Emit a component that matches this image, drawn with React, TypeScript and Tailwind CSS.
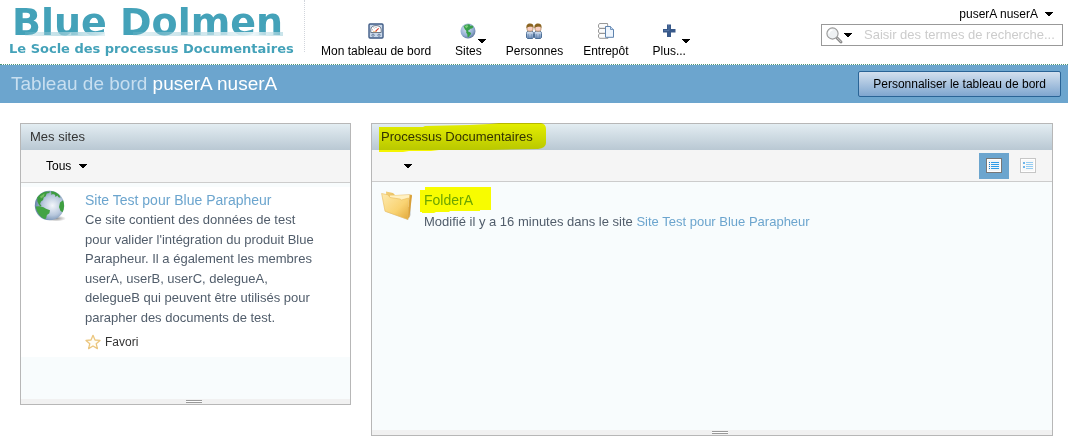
import type { ReactNode } from "react";

function Caret({ className = "" }: { className?: string }) {
  return (
    <svg className={className} width="8" height="4" viewBox="0 0 8 4" shapeRendering="crispEdges" aria-hidden="true">
      <path d="M0 0h8v1H7v1H6v1H5v1H3V3H2V2H1V1H0z" fill="#000" />
    </svg>
  );
}

function GaugeIcon() {
  return (
    <svg width="16" height="16" viewBox="0 0 16 16" aria-hidden="true">
      <rect x="1" y="1" width="14" height="14" rx="1" fill="#c9d8ea" stroke="#3f5b85" strokeWidth="1.4" />
      <path d="M2.800 9.500V6.800C2.800 4 5 2.600 8 2.600s5.200 1.400 5.200 4.200v2.700z" fill="#fff" stroke="#4c5b70" strokeWidth=".8" />
      <path d="M4.300 6.700l.8.400M5.800 4.600l.5.700M8 4v.8" stroke="#555" strokeWidth=".7" />
      <path d="M7.500 8.400l3.200-3" stroke="#e0392b" strokeWidth="1.200" />
      <path d="M5 8.700h4" stroke="#e9a24a" strokeWidth=".7" />
      <circle cx="5" cy="12.200" r="1.100" fill="#fff" stroke="#3f5b85" strokeWidth=".8" />
      <circle cx="11" cy="12.200" r="1.100" fill="#fff" stroke="#3f5b85" strokeWidth=".8" />
    </svg>
  );
}

function SmallGlobeIcon() {
  return (
    <svg width="16" height="16" viewBox="0 0 16 16" aria-hidden="true">
      <defs>
        <radialGradient id="smallGlobe" cx=".4" cy=".35" r=".7">
          <stop offset="0" stopColor="#d6e2f2" />
          <stop offset=".65" stopColor="#94aed3" />
          <stop offset="1" stopColor="#5a7399" />
        </radialGradient>
      </defs>
      <circle cx="8" cy="8" r="7.500" fill="url(#smallGlobe)" />
      <path d="M3.500 3.200C5 1.600 7.500.9 9.500 1.300l.8 1.500 2-.3 1.200 1.400-1.500 1.500-1.600.3L9 7.200l-1 .3.500 1.300 1.800.4.900 1.500-1.600 2-1.100 1.600-1-.6-.2-2.500-1.200-1.800.3-1.300L4.800 6.300z" fill="#37a04a" />
      <path d="M4.500 3.300l2.700-1.200 1 1.500-1.800 1.600z" fill="#7ccb7a" />
    </svg>
  );
}

function PeopleIcon() {
  return (
    <svg width="16" height="16" viewBox="0 0 16 16" aria-hidden="true">
      <defs>
        <linearGradient id="shirt" x1="0" y1="0" x2="0" y2="1">
          <stop offset="0" stopColor="#e4eefa" />
          <stop offset="1" stopColor="#6688b5" />
        </linearGradient>
      </defs>
      {[0, 8].map((x) => (
        <g key={x} transform={`translate(${x} 0)`}>
          <path d="M.5 14.500V10.500C.5 8.800 1.200 8 4 8s3.500.8 3.500 2.500v4l-1 1h-5z" fill="url(#shirt)" stroke="#42658f" strokeWidth=".9" />
          <path d="M2.300 11v4M5.700 11v4" stroke="#6382ab" strokeWidth=".6" />
          <rect x="1" y="3" width="6" height="5.200" rx="2" fill="#f7cfc4" stroke="#9a7040" strokeWidth=".6" />
          <path d="M.5 5.500C0 2 1.500.6 4 .6S8 2 7.500 5.200L6.600 3.800 4 3.500 1.400 4.200z" fill="#8a6420" />
        </g>
      ))}
    </svg>
  );
}

function RepositoryIcon() {
  return (
    <svg width="16" height="16" viewBox="0 0 16 16" aria-hidden="true">
      <g fill="#fbfbfb" stroke="#8d8d8d" strokeWidth=".9">
        <path d="M9.500 .5H1.500L.5 2v2l1 1.300H10z" />
        <path d="M9.500 5.500h-8L.5 7v2l1 1.300H10z" />
        <path d="M9.500 10.500h-8L.5 12v2l1 1.300H10z" />
      </g>
      <path d="M7.500 3.500h5l3 3v7.800h-8z" fill="#eef5fd" stroke="#5e83ae" />
      <path d="M12.500 3.500v3h3" fill="#c4d8ee" stroke="#5e83ae" strokeWidth=".8" />
    </svg>
  );
}

function PlusIcon() {
  return (
    <svg width="16" height="16" viewBox="0 0 16 16" aria-hidden="true">
      <path d="M6 1.500h4v4.500h4.500v3.500H10v4.500H6V9.500H2V6h4z" fill="#38598a" />
      <path d="M7 2.500h1v5H3" fill="none" stroke="#5b7bab" strokeWidth=".7" />
    </svg>
  );
}

function MagnifierIcon() {
  return (
    <svg width="17" height="17" viewBox="0 0 17 17" aria-hidden="true">
      <path d="M10.800 10.800l4.200 4.200" stroke="#777" strokeWidth="2.800" strokeLinecap="round" />
      <path d="M11 10.800l4 4" stroke="#c4c4c4" strokeWidth="1.200" strokeLinecap="round" />
      <circle cx="6.500" cy="6.500" r="5.600" fill="#eef1f3" stroke="#999" strokeWidth="1.100" />
      <path d="M3 6.500A3.500 3.500 0 016.500 3" fill="none" stroke="#fff" strokeWidth="1.500" />
    </svg>
  );
}

function GlobeIcon() {
  return (
    <svg width="32" height="32" viewBox="0 0 32 32" aria-hidden="true">
      <defs>
        <radialGradient id="globe" cx=".6" cy=".5" r=".6">
          <stop offset="0" stopColor="#f3f6fb" />
          <stop offset=".55" stopColor="#b8c8dd" />
          <stop offset="1" stopColor="#6482a8" />
        </radialGradient>
        <radialGradient id="globeShadow">
          <stop offset="0" stopColor="#000" stopOpacity=".45" />
          <stop offset="1" stopColor="#000" stopOpacity="0" />
        </radialGradient>
      </defs>
      <ellipse cx="22" cy="28.500" rx="10" ry="3" fill="url(#globeShadow)" />
      <circle cx="15.500" cy="15.500" r="14.700" fill="url(#globe)" />
      <path d="M3.200 7.600C5 5 7.800 2.700 11 1.700l5-.3-.8 1.500-2.500.6-1 2.800-2.100 1.100-.5 2.600-2.100 1.400-1 2.600 1.500 1.500-1.300.9L4.500 14l-1.200-2.700z" fill="#3c9c3f" />
      <path d="M1.500 16.500l4-.2 4 1 2.500 1.500 4 1.500-.6 2.900-2.500 1.800-.7 3-1 1.200C6.500 27.500 3 23 1.500 16.500z" fill="#43a344" />
      <path d="M17 1.200c3.500.2 6 1.400 8.300 3.800l1.200 2.700-2-.5-1.200-1.800-1.800 1.500-.5-2.200-2.200-.6L17.500 5z" fill="#3c9c3f" />
      <path d="M26 12.500l3-2.300c1.700 4 1.400 8.300-.5 12l-2-1.200-1.500-4z" fill="#3f9f40" />
      <path d="M6 6.500l4.500-3-.5 3-3 2z" fill="#73bd63" />
    </svg>
  );
}

function FolderIcon() {
  return (
    <svg width="32" height="32" viewBox="0 0 32 32" aria-hidden="true">
      <defs>
        <linearGradient id="folderFront" x1="0" y1="0" x2="1" y2="1">
          <stop offset="0" stopColor="#fdeab0" />
          <stop offset=".6" stopColor="#f9d372" />
          <stop offset="1" stopColor="#e2a93b" />
        </linearGradient>
        <linearGradient id="folderBack" x1="0" y1="0" x2="1" y2="0">
          <stop offset="0" stopColor="#f2cf78" />
          <stop offset="1" stopColor="#dca63b" />
        </linearGradient>
      </defs>
      <path d="M5 22l22 8 3-5V8z" fill="#000" opacity=".12" />
      <path d="M5 1.500l7 1.500 2 2 15-.5 1.500 1-3 22L6 18z" fill="url(#folderBack)" />
      <path d="M9 5.500L28.500 5l-1 12-20 0z" fill="#fff1c2" />
      <path d="M29.800 4.200L31 5.500 28.500 27l-2 1.500z" fill="#d99f37" />
      <path d="M.6 3.500l6.500 1.300L9 7.500l10 1.500L20.500 10l7-2-.5 21.500L4 21.200z" fill="url(#folderFront)" stroke="#e8bb5c" strokeWidth=".6" />
    </svg>
  );
}

function StarIcon() {
  return (
    <svg width="16" height="16" viewBox="0 0 16 16" aria-hidden="true">
      <path d="M8 1.300l2 4.700 5 .4-3.800 3.300 1.200 4.900L8 12l-4.400 2.600 1.200-4.900L1 6.400 6 6z" fill="#fffdf6" stroke="#ebc67e" strokeWidth="1.300" strokeLinejoin="round" />
    </svg>
  );
}

function ListIcon({ detailed = false }: { detailed?: boolean }) {
  const rows = [4, 6, 8, 10];
  return (
    <svg width="16" height="15" viewBox="0 0 16 15" shapeRendering="crispEdges" aria-hidden="true">
      <rect x=".5" y=".5" width="15" height="14" fill="#fff" stroke={detailed ? "#c6c6c6" : "#777"} />
      <rect x="2" y="2" width="12" height="11" fill={detailed ? "#f8f8f8" : "#f1f4f7"} />
      {rows.map((y) => (
        <rect key={y} x={detailed ? 6 : 5} y={y} width={detailed ? 7 : 8} height="1" fill={detailed ? "#94ccf2" : "#2d9be8"} />
      ))}
      {detailed
        ? [4, 8].map((y) => <rect key={y} x="3" y={y} width="2" height="2" fill="#6fb5ea" />)
        : rows.map((y) => <rect key={y} x="3" y={y} width="1" height="1" fill="#1279cf" />)}
    </svg>
  );
}

function NavItem({ icon, label, menu = false }: { icon: ReactNode; label: string; menu?: boolean }) {
  return (
    <a href="#" className={`relative flex flex-col items-center gap-1 whitespace-nowrap text-black ${menu ? "px-1" : ""}`}>
      {icon}
      <span className="leading-4">{label}</span>
      {menu && <Caret className="absolute top-4 right-0" />}
    </a>
  );
}

function Logo() {
  return (
    <a href="#" className="block w-[305px] shrink-0 border-r border-dotted border-gray-300 pl-[9px] font-['DejaVu_Sans',sans-serif] font-bold whitespace-nowrap text-[#44a2b9]">
      <span className="relative block pt-[3px] pl-[3px] text-[38px] leading-[38px]">
        Blue Dolmen
        <svg className="absolute top-8 left-4 h-1 w-[258px]" viewBox="0 0 258 4" preserveAspectRatio="none" aria-hidden="true">
          <defs>
            <linearGradient id="shineBlue" x1="0" y1="0" x2="1" y2="0">
              <stop offset="0" stopColor="#8cc5d3" stopOpacity=".2" />
              <stop offset=".6" stopColor="#a5d2dd" stopOpacity=".8" />
              <stop offset="1" stopColor="#e0f0f4" stopOpacity=".9" />
            </linearGradient>
            <linearGradient id="shineDolmen" x1="0" y1="0" x2="1" y2="0">
              <stop offset="0" stopColor="#8cc5d3" stopOpacity=".2" />
              <stop offset=".4" stopColor="#b5d9e2" stopOpacity=".7" />
              <stop offset=".8" stopColor="#eaf5f8" stopOpacity=".9" />
              <stop offset="1" stopColor="#a5d2dd" stopOpacity=".6" />
            </linearGradient>
          </defs>
          <rect width="80" height="4" fill="url(#shineBlue)" />
          <rect x="108" width="150" height="4" fill="url(#shineDolmen)" />
        </svg>
      </span>
      <span className="block text-[13px] leading-4">Le Socle des processus Documentaires</span>
    </a>
  );
}

function PanelHeader({ children }: { children: ReactNode }) {
  return (
    <h2 className="h-[26px] bg-linear-to-b from-[#e3edf2] to-[#b9c8d3] pl-[9px] text-[13px] leading-[26px] text-[#333]">
      {children}
    </h2>
  );
}

function ResizeHandle() {
  return (
    <div className="flex h-[5px] items-center justify-center bg-[#f1f1f1] pl-4">
      <span className="block h-[3px] w-4 border-y border-[#999] bg-white" />
    </div>
  );
}

export default function App() {
  return (
    <div className="min-h-screen bg-white font-['Liberation_Sans',Arial,sans-serif] text-[12px] text-black">
      <header className="flex h-[65px] border-b border-dotted border-[#4a9478]">
        <div className="flex pb-3">
          <Logo />
        </div>
        <nav className="flex gap-5 pt-[23px] pl-4 text-[12px]">
          <NavItem icon={<GaugeIcon />} label="Mon tableau de bord" />
          <NavItem icon={<SmallGlobeIcon />} label="Sites" menu />
          <NavItem icon={<PeopleIcon />} label="Personnes" />
          <NavItem icon={<RepositoryIcon />} label="Entrepôt" />
          <NavItem icon={<PlusIcon />} label="Plus..." menu />
        </nav>
        <div className="ml-auto flex w-[247px] flex-col items-end pt-1.5 pr-[5px]">
          <button type="button" className="flex items-center gap-[7px] pr-2.5 leading-4">
            puserA nuserA
            <Caret />
          </button>
          <form role="search" className="mt-0.5 flex h-[22px] w-full items-center border border-[#999] bg-white pl-1">
            <button type="button" aria-label="Options de recherche" className="flex items-center gap-px">
              <MagnifierIcon />
              <Caret />
            </button>
            <input
              type="text"
              aria-label="Rechercher"
              placeholder="Saisir des termes de recherche..."
              className="ml-3 min-w-0 flex-1 bg-transparent text-[13px] outline-none placeholder:text-[#ccc]"
            />
          </form>
        </div>
      </header>

      <div className="flex h-[38px] items-center justify-between bg-[#6ca5ce] pr-[7px] pl-[11px]">
        <h1 className="text-[19px] text-[#c8dff0]">
          Tableau de bord <span className="text-white">puserA nuserA</span>
        </h1>
        <button
          type="button"
          className="h-[26px] rounded-xs border border-[#2a6496] bg-linear-to-b from-[#d3e0ee] to-[#7fa6cf] px-3.5 text-[12px]"
        >
          Personnaliser le tableau de bord
        </button>
      </div>

      <main className="grid grid-cols-[331fr_682fr] items-start gap-5 pt-5 pr-[15px] pl-5">
        <section className="border border-[#b7b7b7] bg-[#f8fcfd]">
          <PanelHeader>Mes sites</PanelHeader>
          <div className="flex h-[33px] items-center border-b border-[#ccc] bg-[#f5f5f5] pl-[25px]">
            <button type="button" className="flex items-center gap-2">
              Tous
              <Caret />
            </button>
          </div>
          <div className="h-[216px] pt-1">
            <article className="flex bg-white pt-[3px] pb-[7px] pl-[13px]">
              <GlobeIcon />
              <div className="ml-[19px] w-[232px]">
                <h3 className="text-[14px] leading-5">
                  <a href="#" className="text-[#6ca5ce]">Site Test pour Blue Parapheur</a>
                </h3>
                <p className="text-[13px] leading-normal text-[#515d6b]">
                  Ce site contient des données de test pour valider l'intégration du produit Blue Parapheur. Il a également les membres userA, userB, userC, delegueA, delegueB qui peuvent être utilisés pour parapher des documents de test.
                </p>
                <button type="button" className="mt-[7px] flex items-center gap-1 leading-4 text-[#333]">
                  <StarIcon />
                  Favori
                </button>
              </div>
            </article>
          </div>
          <ResizeHandle />
        </section>

        <section className="border border-[#b7b7b7] bg-[#f8fcfd]">
          <PanelHeader>
            <span className="relative inline-block">
              Processus Documentaires
              <svg className="absolute -top-px -left-0.5 mix-blend-multiply" width="168" height="30" viewBox="0 0 168 30" aria-hidden="true">
                <path d="M0 4H44L46 3 90 2 110 1 120 0H162q5 1 5 6V20q0 5-8 6L110 27H60L52 28H30L24 29H0z" fill="#ff0" />
              </svg>
            </span>
          </PanelHeader>
          <div className="flex h-8 items-center justify-between border-b border-[#ccc] bg-[#f5f5f5] pr-[9px] pl-8">
            <button type="button" aria-label="Filtre" className="flex h-4 items-center">
              <Caret />
            </button>
            <div className="flex items-center gap-1">
              <button type="button" aria-label="Vue simple" className="flex h-[26px] w-[30px] items-center justify-center bg-[#6ca5ce]">
                <ListIcon />
              </button>
              <button type="button" aria-label="Vue détaillée" className="flex h-[26px] w-[30px] items-center justify-center">
                <ListIcon detailed />
              </button>
            </div>
          </div>
          <div className="h-[248px] pt-2 pl-[9px]">
            <article className="flex">
              <FolderIcon />
              <div className="ml-[11px]">
                <h3 className="text-[14px] leading-5">
                  <span className="relative inline-block">
                    <a href="#" className="text-[#6ca5ce]">FolderA</a>
                    <svg className="absolute -top-1 -left-1 mix-blend-multiply" width="72" height="28" viewBox="0 0 72 28" aria-hidden="true">
                      <path d="M5 1H71V24H60V25H30L29 26H16L14 27H2V26H0V4H5z" fill="#ff0" />
                    </svg>
                  </span>
                </h3>
                <p className="relative mt-0.5 text-[13px] leading-5 text-[#515d6b]">
                  Modifié il y a 16 minutes dans le site{" "}
                  <a href="#" className="text-[#6ca5ce]">Site Test pour Blue Parapheur</a>
                </p>
              </div>
            </article>
          </div>
          <ResizeHandle />
        </section>
      </main>
    </div>
  );
}
